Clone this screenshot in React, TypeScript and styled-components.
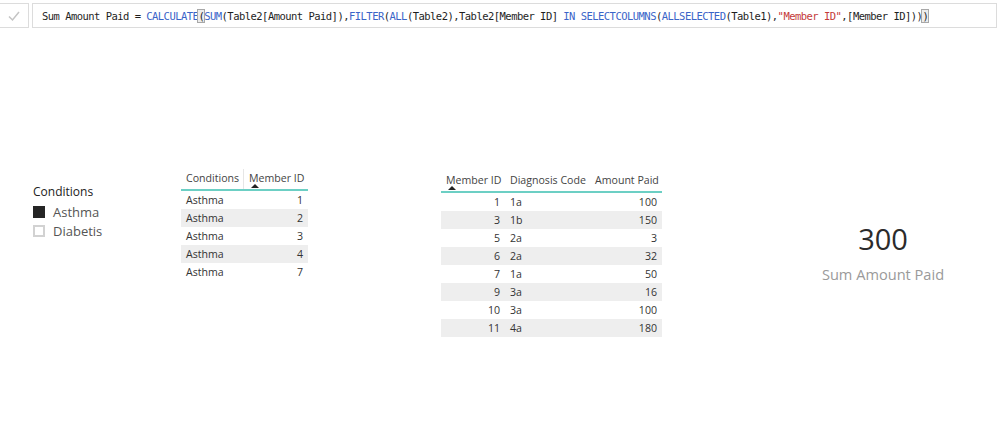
import styled, { createGlobalStyle } from 'styled-components'

const GlobalStyle = createGlobalStyle`
  html, body {
    margin: 0;
    padding: 0;
    background: #ffffff;
  }
  body {
    font-family: 'Open Sans', 'Noto Sans', sans-serif;
    color: #333333;
  }
`

const Page = styled.div`
  width: 999px;
  height: 435px;
  overflow: hidden;
  background: #ffffff;
`

const FormulaBar = styled.div`
  display: flex;
  gap: 3px;
  padding-top: 3px;
  height: 25px;
`

const CheckCell = styled.div`
  width: 28px;
  height: 23px;
  border: 1px solid #dcdcdc;
  border-left: none;
  display: flex;
  align-items: center;
  justify-content: center;
`

const FormulaBox = styled.div`
  flex: 1;
  height: 23px;
  border: 1px solid #dcdcdc;
  margin-right: 2px;
  display: flex;
  align-items: center;
  padding-left: 9px;
`

const Code = styled.code`
  font-family: 'DejaVu Sans Mono', 'Liberation Mono', monospace;
  font-size: 10.5px;
  letter-spacing: -0.53px;
  color: #1e1e1e;
  white-space: pre;
`

const Kw = styled.span`
  color: #3a64c8;
`

const Str = styled.span`
  color: #c43a3a;
`

const Bracket = styled.span`
  background: #ececec;
  outline: 1px solid #a8a8a8;
  color: #1e1e1e;
`

const Canvas = styled.div`
  display: flex;
  align-items: flex-start;
  padding-left: 33px;
`

const Slicer = styled.div`
  margin-top: 155px;
  width: 148px;
  display: flex;
  flex-direction: column;
`

const SlicerTitle = styled.div`
  font-size: 12px;
  color: #222;
  height: 18px;
  line-height: 18px;
  margin-bottom: 1px;
`

const SlicerItem = styled.div`
  display: flex;
  align-items: center;
  gap: 8px;
  height: 19px;
  font-size: 13px;
  color: #555;
`

const Box = styled.span<{ $on: boolean }>`
  box-sizing: border-box;
  width: 12px;
  height: 12px;
  background: ${(p) => (p.$on ? '#252525' : '#ffffff')};
  border: 2px solid ${(p) => (p.$on ? '#252525' : '#d2d2d2')};
`

const Table = styled.div<{ $top: number; $left: number; $width: number }>`
  margin-top: ${(p) => p.$top}px;
  margin-left: ${(p) => p.$left}px;
  width: ${(p) => p.$width}px;
  font-size: 10.6px;
  color: #333;
`

const Head = styled.div<{ $cols: string }>`
  display: grid;
  grid-template-columns: ${(p) => p.$cols};
  height: 20px;
  border-bottom: 2px solid #6ccfc4;
`

const HeadCell = styled.div<{ $divider?: boolean }>`
  position: relative;
  padding: 0 5px;
  line-height: 18px;
  color: #444;
  white-space: nowrap;
  border-left: ${(p) => (p.$divider ? '1px solid #e6e6e6' : 'none')};
`

const SortArrow = styled.span`
  position: absolute;
  left: 7px;
  bottom: 1px;
  width: 0;
  height: 0;
  border-left: 4px solid transparent;
  border-right: 4px solid transparent;
  border-bottom: 4px solid #222;
`

const Row = styled.div<{ $cols: string; $alt: boolean }>`
  display: grid;
  grid-template-columns: ${(p) => p.$cols};
  height: 18px;
  line-height: 18px;
  background: ${(p) => (p.$alt ? '#eeeeee' : '#ffffff')};
`

const Cell = styled.div<{ $right?: boolean }>`
  padding: 0 5px;
  text-align: ${(p) => (p.$right ? 'right' : 'left')};
  white-space: nowrap;
`

const Card = styled.div`
  margin-top: 193px;
  margin-left: 156px;
  width: 130px;
  display: flex;
  flex-direction: column;
  align-items: center;
`

const CardValue = styled.div`
  font-size: 29px;
  color: #2b2b2b;
  line-height: 36px;
`

const CardLabel = styled.div`
  font-size: 14.6px;
  color: #9a9a9a;
  line-height: 20px;
  margin-top: 7px;
  white-space: nowrap;
`

const conditions = [1, 2, 3, 4, 7]

const claims = [
  { id: 1, code: '1a', paid: 100 },
  { id: 3, code: '1b', paid: 150 },
  { id: 5, code: '2a', paid: 3 },
  { id: 6, code: '2a', paid: 32 },
  { id: 7, code: '1a', paid: 50 },
  { id: 9, code: '3a', paid: 16 },
  { id: 10, code: '3a', paid: 100 },
  { id: 11, code: '4a', paid: 180 },
]

const t1Cols = '62px 65px'
const t2Cols = '64px 85px 72px'

const Check = () => (
  <svg width="14" height="12" viewBox="0 0 14 12">
    <path d="M2 6.5 L5.5 10 L12 2" fill="none" stroke="#c4c4c4" strokeWidth="1.5" />
  </svg>
)

const App = () => {
  return (
    <Page>
      <GlobalStyle />
      <FormulaBar>
        <CheckCell>
          <Check />
        </CheckCell>
        <FormulaBox>
          <Code>
            {'Sum Amount Paid = '}
            <Kw>CALCULATE</Kw>
            <Bracket>(</Bracket>
            <Kw>SUM</Kw>
            {'(Table2[Amount Paid]),'}
            <Kw>FILTER</Kw>
            {'('}
            <Kw>ALL</Kw>
            {'(Table2),Table2[Member ID] '}
            <Kw>IN</Kw>
            {' '}
            <Kw>SELECTCOLUMNS</Kw>
            {'('}
            <Kw>ALLSELECTED</Kw>
            {'(Table1),'}
            <Str>"Member ID"</Str>
            {',[Member ID]))'}
            <Bracket>)</Bracket>
          </Code>
        </FormulaBox>
      </FormulaBar>

      <Canvas>
        <Slicer>
          <SlicerTitle>Conditions</SlicerTitle>
          <SlicerItem>
            <Box $on />
            Asthma
          </SlicerItem>
          <SlicerItem>
            <Box $on={false} />
            Diabetis
          </SlicerItem>
        </Slicer>

        <Table $top={141} $left={0} $width={127}>
          <Head $cols={t1Cols}>
            <HeadCell>Conditions</HeadCell>
            <HeadCell $divider>
              Member ID
              <SortArrow />
            </HeadCell>
          </Head>
          {conditions.map((id, i) => (
            <Row key={id} $cols={t1Cols} $alt={i % 2 === 1}>
              <Cell>Asthma</Cell>
              <Cell $right>{id}</Cell>
            </Row>
          ))}
        </Table>

        <Table $top={143} $left={133} $width={221}>
          <Head $cols={t2Cols}>
            <HeadCell>
              Member ID
              <SortArrow />
            </HeadCell>
            <HeadCell>Diagnosis Code</HeadCell>
            <HeadCell>Amount Paid</HeadCell>
          </Head>
          {claims.map((c, i) => (
            <Row key={c.id} $cols={t2Cols} $alt={i % 2 === 1}>
              <Cell $right>{c.id}</Cell>
              <Cell>{c.code}</Cell>
              <Cell $right>{c.paid}</Cell>
            </Row>
          ))}
        </Table>

        <Card>
          <CardValue>300</CardValue>
          <CardLabel>Sum Amount Paid</CardLabel>
        </Card>
      </Canvas>
    </Page>
  )
}

export default App
